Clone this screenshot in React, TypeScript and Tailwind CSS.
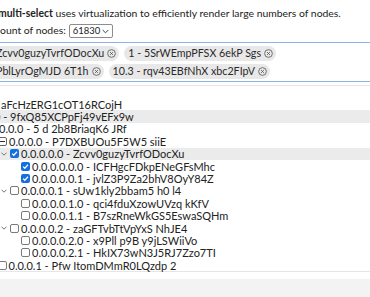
import React from "react";

type Row = { x: number; label: string; check?: "on" | "off" | "mixed"; chevron?: boolean; hl?: boolean };

const ROWS: Row[] = [
  { x: -15, label: "0 - aFcHzERG1cOT16RCojH" },
  { x: -15, label: "0.0 - 9fxQ85XCPpFj49vEFx9w", hl: true },
  { x: -1, label: "0.0.0 - 5 d 2b8BriaqK6 JRf" },
  { x: 9, label: "0.0.0.0 - P7DXBUOu5F5W5 siiE", check: "mixed", chevron: true },
  { x: 21, label: "0.0.0.0.0 - Zcvv0guzyTvrfODocXu", check: "on", chevron: true, hl: true },
  { x: 32, label: "0.0.0.0.0.0 - ICFHgcFDkpENeGFsMhc", check: "on" },
  { x: 32, label: "0.0.0.0.0.1 - jvlZ3P9Za2bhV8OyY84Z", check: "on" },
  { x: 21, label: "0.0.0.0.1 - sUw1kly2bbam5 h0 l4", check: "off", chevron: true },
  { x: 32, label: "0.0.0.0.1.0 - qci4fduXzowUVzq kKfV", check: "off" },
  { x: 32, label: "0.0.0.0.1.1 - B7szRneWkGS5EswaSQHm", check: "off" },
  { x: 21, label: "0.0.0.0.2 - zaGFTvbTtVpYxS NhJE4", check: "off", chevron: true },
  { x: 32, label: "0.0.0.0.2.0 - x9Pll p9B y9jLSWiiVo", check: "off" },
  { x: 32, label: "0.0.0.0.2.1 - HkIX73wN3J5RJ7Zzo7TI", check: "off" },
  { x: 8.5, label: "0.0.0.1 - Pfw ItomDMmR0LQzdp 2", check: "off" },
];

function CloseIcon() {
  return (
    <svg width="9" height="9" viewBox="0 0 10 10" className="shrink-0">
      <circle cx="5" cy="5" r="4.3" fill="none" stroke="#555" strokeWidth="0.9" />
      <path d="M3.4 3.4 6.6 6.6M6.6 3.4 3.4 6.6" stroke="#555" strokeWidth="0.9" />
    </svg>
  );
}

function Chip({ label }: { label: string }) {
  return (
    <span className="inline-flex h-[15px] shrink-0 items-center gap-[3px] rounded-full bg-[#e8e8e8] pl-[4px] pr-[3px] text-[10.7px] leading-none text-[#2a2a2a]">
      {label}
      <CloseIcon />
    </span>
  );
}

function Check({ kind }: { kind?: "on" | "off" | "mixed" }) {
  if (kind === "on")
    return (
      <span className="flex h-[9px] w-[9px] shrink-0 items-center justify-center rounded-[2px] bg-[#1570df]">
        <svg width="7" height="7" viewBox="0 0 8 8">
          <path d="M1.3 4.2 3.2 6 6.8 2" fill="none" stroke="#fff" strokeWidth="1.4" />
        </svg>
      </span>
    );
  if (kind === "mixed")
    return (
      <span className="flex h-[9px] w-[9px] shrink-0 items-center justify-center rounded-[2px] border border-[#666] bg-white">
        <span className="h-px w-[5px] bg-[#333]" />
      </span>
    );
  return <span className="h-[9px] w-[9px] shrink-0 rounded-[2px] border border-[#7a7a7a] bg-white" />;
}

export default function App() {
  return (
    <div className="relative h-[297px] w-[370px] overflow-hidden bg-white font-['Lato','Noto_Sans',sans-serif] text-[11px] text-[#222]">
      <p className="-ml-[2px] h-[20px] whitespace-nowrap pt-[6px] text-[10.4px] leading-[14px]">
        <b>multi-select</b> uses virtualization to efficiently render large numbers of nodes.
      </p>

      <div className="mt-[4px] flex h-[14px] items-center gap-[3px] whitespace-nowrap text-[10.4px]">
        <span>ount of nodes:</span>
        <span className="flex h-[14px] w-[44px] items-center justify-between rounded-[2px] border border-[#8c8c8c] pl-[3px] pr-[3px] text-[9.5px]">
          61830
          <svg width="7" height="5" viewBox="0 0 7 5">
            <path d="M0.7 1 3.5 3.8 6.3 1" fill="none" stroke="#444" strokeWidth="1" />
          </svg>
        </span>
      </div>

      {/* selected chips */}
      <div className="-ml-[20px] mt-[4px] flex h-[40px] w-[420px] flex-col gap-[3px] border border-[#8db2e8] pl-[16px] pt-[3px]">
        <div className="-ml-[5px] flex gap-[5px]">
          <Chip label="Zcvv0guzyTvrfODocXu" />
          <Chip label="1 - 5SrWEmpPFSX 6ekP Sgs" />
        </div>
        <div className="-ml-[5px] flex gap-[5px]">
          <Chip label="PblLyrOgMJD 6T1h" />
          <Chip label="10.3 - rqv43EBfNhX xbc2FIpV" />
        </div>
      </div>

      {/* tree */}
      <div className="mt-[3px] border-t border-b border-[#e6e6e6] pt-[12px]">
        {ROWS.map((r) => (
          <div key={r.label} className={`flex h-[12.4px] items-center whitespace-nowrap ${r.hl ? "bg-[#ebebeb]" : ""}`}>
            <div className="flex items-center" style={{ marginLeft: r.x - 22 }}>
              <span className="flex w-[11px] shrink-0 items-center pl-[2px]">
                {r.chevron && (
                  <svg width="6" height="4" viewBox="0 0 6 4">
                    <path d="M0.5 0.7 3 3.2 5.5 0.7" fill="none" stroke="#666" strokeWidth="0.9" />
                  </svg>
                )}
              </span>
              <Check kind={r.check} />
              <span className="ml-[2px] leading-none">{r.label}</span>
            </div>
          </div>
        ))}
      </div>

      <div className="mt-[7px] h-[30px] bg-[#f3f3f3]" />
    </div>
  );
}
